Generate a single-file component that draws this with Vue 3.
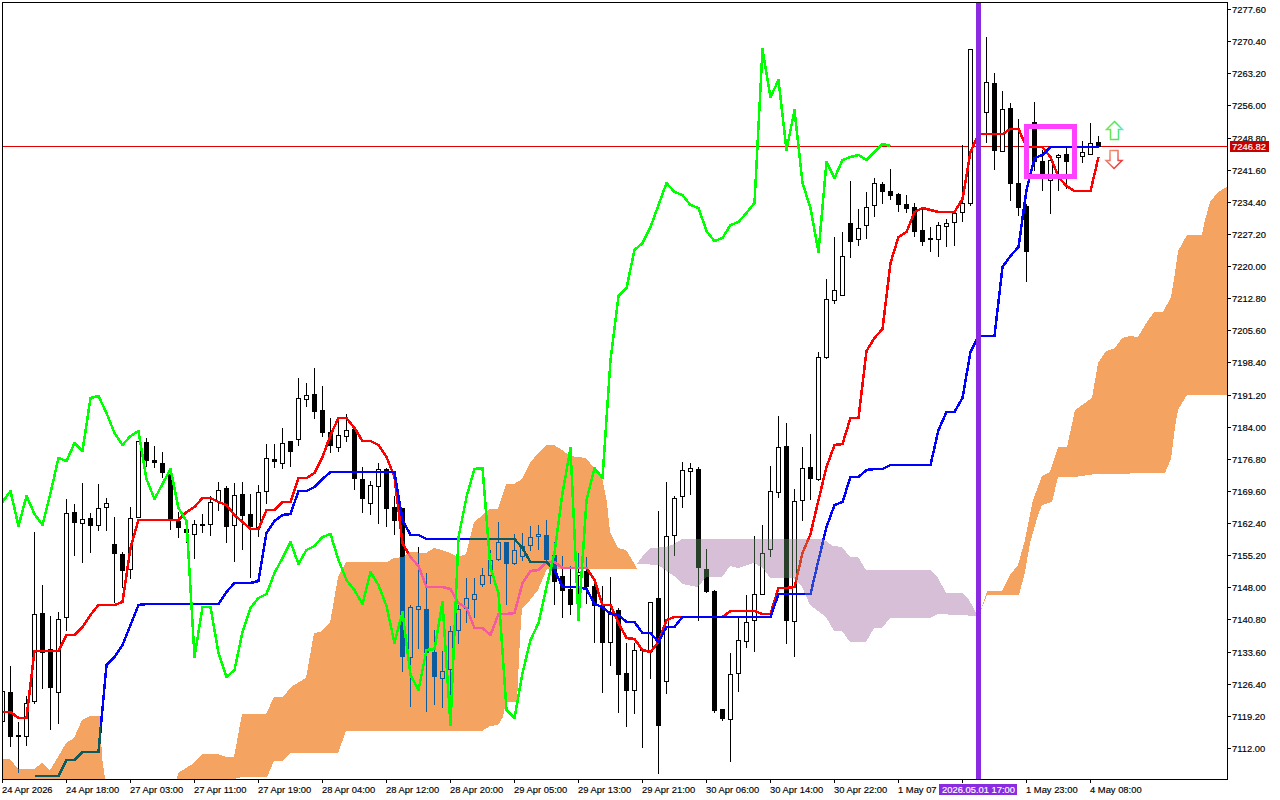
<script setup>
const raw = `0,680,745,691,721,1;1,666,746,692,737,0;2,722,772,735,737,0;3,696,745,703,736,1;4,532,703,614,701,1;5,585,688,613,653,0;6,616,729,649,688,0;7,612,723,619,692,1;8,499,630,513,617,1;9,504,555,512,523,0;10,483,562,519,523,1;11,513,552,518,526,0;12,484,530,508,525,1;13,498,530,503,507,1;14,517,602,544,554,0;15,552,587,554,571,0;16,507,578,518,569,1;17,441,517,441,517,1;18,438,466,442,461,0;19,446,467,460,463,0;20,452,477,463,473,0;21,470,529,474,521,0;22,512,537,521,528,0;23,519,542,529,533,0;24,520,558,524,534,1;25,514,532,524,525,0;26,496,535,502,524,1;27,482,510,490,501,1;28,486,542,488,527,0;29,483,561,495,525,1;30,482,549,494,516,0;31,494,577,514,527,0;32,485,536,492,527,1;33,444,503,458,491,1;34,444,467,459,462,0;35,428,468,443,463,1;36,441,466,441,452,0;37,378,445,398,439,1;38,383,406,395,399,1;39,368,418,394,412,0;40,386,436,410,433,0;41,418,452,432,446,0;42,420,451,435,447,1;43,414,441,430,436,1;44,426,489,429,479,0;45,467,512,479,499,0;46,481,514,485,503,1;47,463,523,469,486,1;48,468,526,469,509,0;49,496,534,507,521,0;50,508,671,508,657,0;51,605,706,607,657,1;52,547,648,606,609,1;53,573,711,609,653,0;54,630,704,652,677,0;55,651,707,671,678,1;56,626,702,631,669,1;57,605,643,609,630,1;58,578,622,598,608,1;59,578,617,594,599,1;60,568,586,575,584,1;61,550,583,560,575,1;62,522,560,542,559,1;63,542,604,542,564,0;64,534,564,550,563,1;65,533,560,546,556,1;66,526,550,537,545,1;67,525,549,534,536,1;68,520,561,535,560,0;69,542,604,555,582,0;70,556,617,576,591,0;71,566,614,589,605,0;72,553,605,572,575,1;73,557,603,571,587,0;74,580,642,586,606,0;75,586,692,605,643,0;76,577,665,612,642,1;77,608,712,610,675,0;78,643,726,673,691,0;79,643,713,650,690,1;80,649,747,649,650,0;81,602,678,602,651,1;82,511,773,598,726,0;83,482,693,536,681,1;84,496,555,498,535,1;85,462,507,470,496,1;86,463,494,468,471,1;87,467,620,469,568,0;88,549,592,569,592,0;89,590,712,591,711,0;90,709,720,709,719,0;91,653,761,674,719,1;92,618,691,640,673,1;93,595,647,622,641,1;94,536,651,594,620,1;95,525,594,553,594,1;96,466,556,491,549,1;97,416,497,447,492,1;98,423,643,446,621,0;99,489,656,501,621,1;100,447,520,468,500,1;101,434,499,467,479,0;102,352,480,357,479,1;103,279,358,299,357,1;104,237,303,290,300,1;105,232,295,256,295,1;106,181,257,223,242,0;107,209,245,228,239,1;108,192,238,207,225,1;109,178,216,183,205,1;110,182,203,184,192,0;111,169,199,191,196,0;112,193,211,194,205,0;113,195,212,204,209,0;114,203,236,207,232,0;115,208,245,230,242,0;116,227,251,238,240,0;117,222,256,225,239,1;118,219,246,223,226,1;119,213,245,213,222,1;120,145,221,203,212,1;121,49,205,49,203,1;123,37,142,82,112,1;124,73,169,83,151,0;125,91,150,109,151,1;126,103,200,108,184,0;127,119,215,183,208,0;128,204,281,206,252,0;129,102,170,122,162,0;130,150,190,161,174,0;131,159,213,160,180,1;132,154,190,155,157,1;133,148,188,154,162,0;135,141,162,152,156,1;136,123,154,143,154,1;137,136,147,142,147,0`

const candles = raw.split(';').map((row) => {
  const [k, hi, lo, top, bot, up] = row.split(',').map(Number)
  return { x: 2 + 8 * k, hi, lo, top, bot, up: up === 1 }
})

const stepLine = (ys, start = 0) => ys.map((y, i) => `${2.5 + 8 * (i + start)},${y}`).join(' ')

const red = stepLine([712,712,718,718,651,651,651,651,635,635,627,615,605,605,605,602,548,520,520,520,520,520,520,512,507,498,498,502,505,515,522,529,529,510,510,502,502,478,478,473,457,435,418,418,428,441,441,445,457,477,543,557,566,587,587,587,589,603,608,628,628,635,614,614,613,583,571,570,562,562,568,568,568,568,580,605,605,623,638,639,650,652,642,620,617,617,617,617,617,617,617,611,611,611,611,614,614,588,588,587,553,534,500,467,445,444,418,418,351,338,329,263,237,232,212,208,210,212,212,212,199,152,134,134,134,134,129,129,147,147,147,157,177,186,191,191,191,157])

const blue = stepLine([776,776,776,776,760,760,752,752,752,665,657,645,625,605,604,604,604,604,604,604,604,604,604,604,592,583,583,583,581,533,521,515,514,491,491,487,479,472,472,472,472,472,472,472,472,472,520,535,535,539,539,539,539,539,539,539,539,539,539,539,539,548,562,562,562,570,587,587,587,589,604,607,614,615,622,622,633,633,642,627,627,617,617,617,617,617,617,617,617,617,617,617,617,594,594,594,594,594,560,527,505,502,477,477,470,469,469,465,465,465,465,465,465,430,412,412,398,352,336,336,336,267,256,247,190,158,155,147,147,147,147,147,147,147], 4)

const green1 = [502,491,526,496,514,525,493,458,461,443,451,398,396,413,433,445,436,431,479,499,484,469,508,521,657,607,607,653,677,670,632,608,598,594,573,558,542,564,550,546,537,534,560,580,590,604,572,585,606,643,612,675,690,650,649,602,725,537,497,469,468,568,593,710,718,673,640,623,587,553,493,448,620,500,468,478,360,296,288,250,243,227,205,183,192,195,205,208,231,241,238,225,222,213,203,49,97,80,150,110,183,208,252,162,178,160,157,155,160,152,144,146]
const green = stepLine(green1)

const poly = (pts) => pts.map((p) => p.join(',')).join(' ')

const orange = [
  poly([[2,759],[10,759],[18,769],[34,769],[42,763],[50,770],[58,757],[66,743],[74,738],[82,720],[90,716],[100,716],[102,757],[105,779],[2,779]]),
  poly([[177,779],[178,773],[186,768],[194,763],[202,754],[218,754],[226,757],[234,757],[242,714],[266,714],[274,697],[283,697],[291,687],[306,678],[314,633],[320,632],[330,623],[338,577],[346,562],[387,562],[394,558],[403,557],[410,552],[426,553],[434,548],[442,550],[450,553],[458,557],[466,554],[474,522],[490,509],[498,509],[506,484],[514,484],[522,479],[530,463],[538,453],[546,445],[554,445],[562,450],[570,456],[586,458],[594,468],[602,477],[607,503],[610,532],[618,548],[626,550],[634,563],[637,569],[547,569],[538,590],[530,600],[522,608],[520,637],[517,702],[506,702],[503,717],[498,725],[490,726],[482,731],[346,731],[338,753],[290,753],[282,761],[274,761],[267,777],[242,777],[234,779]]),
  poly([[981,610],[987,591],[1002,591],[1010,575],[1018,565],[1025,540],[1033,500],[1042,476],[1050,472],[1058,447],[1067,447],[1075,410],[1092,398],[1098,363],[1106,351],[1115,348],[1122,338],[1130,336],[1138,337],[1147,322],[1154,312],[1163,312],[1171,297],[1175,273],[1178,251],[1187,235],[1202,235],[1205,220],[1210,202],[1218,192],[1227,187],[1227,395],[1187,395],[1178,410],[1175,427],[1171,459],[1165,473],[1095,474],[1075,477],[1058,477],[1052,502],[1042,505],[1038,515],[1030,543],[1025,572],[1019,595],[987,595]])
]

const thistle = poly([[637,564],[642,557],[650,548],[666,547],[674,544],[682,539],[823,539],[833,546],[842,547],[850,557],[858,557],[866,570],[930,570],[938,578],[946,593],[962,593],[968,598],[973,607],[978,616],[938,614],[930,618],[890,618],[882,628],[874,628],[866,642],[850,642],[842,631],[834,631],[826,617],[818,611],[810,605],[802,587],[794,578],[770,578],[763,568],[754,563],[738,568],[730,566],[722,577],[706,577],[698,587],[682,584],[674,576],[658,565],[642,564]])

const prices = ['7277.60','7270.40','7263.20','7256.00','7248.80','7241.60','7234.40','7227.20','7220.00','7212.80','7205.60','7198.40','7191.20','7184.00','7176.80','7169.60','7162.40','7155.20','7148.00','7140.80','7133.60','7126.40','7119.20','7112.00']
const priceTicks = prices.map((label, i) => ({ label, y: Math.round(9 + i * 32.13) }))

const timeTicks = [
  [2,'24 Apr 2026'],[66,'24 Apr 18:00'],[130,'27 Apr 03:00'],[194,'27 Apr 11:00'],[258,'27 Apr 19:00'],
  [322,'28 Apr 04:00'],[386,'28 Apr 12:00'],[450,'28 Apr 20:00'],[514,'29 Apr 05:00'],[578,'29 Apr 13:00'],
  [642,'29 Apr 21:00'],[706,'30 Apr 06:00'],[770,'30 Apr 14:00'],[834,'30 Apr 22:00'],[898,'1 May 07'],
  [962,''],[1026,'1 May 23:00'],[1090,'4 May 08:00']
].map(([x, label]) => ({ x, label }))
</script>

<template>
  <div class="chart">
    <svg class="plot" width="1280" height="800" viewBox="0 0 1280 800" xmlns="http://www.w3.org/2000/svg">
      <defs>
        <clipPath id="plotArea"><rect x="3" y="3" width="1224" height="776" /></clipPath>
        <linearGradient id="upEdge" x1="0" x2="1" y1="0" y2="0">
          <stop offset="0" stop-color="#7fe35a" /><stop offset="0.6" stop-color="#48e848" /><stop offset="1" stop-color="#60e8e8" />
        </linearGradient>
        <linearGradient id="downEdge" x1="0" x2="1" y1="0" y2="1">
          <stop offset="0" stop-color="#f6a07a" /><stop offset="0.6" stop-color="#f05a5a" /><stop offset="1" stop-color="#f01010" />
        </linearGradient>
      </defs>

      <g clip-path="url(#plotArea)">
        <rect class="paper" x="0" y="0" width="1280" height="800" />
        <rect class="price-line" x="3" y="146" width="1224" height="1" />
        <g v-for="(c, i) in candles" :key="i">
          <rect class="ink" :x="c.x" :y="c.hi" width="1" :height="c.lo - c.hi + 1" />
          <rect v-if="c.up" class="body-up" :x="c.x - 1.5" :y="c.top + 0.5" width="4" :height="Math.max(c.bot - c.top, 2)" />
          <rect v-else class="ink" :x="c.x - 2" :y="c.top" width="5" :height="Math.max(c.bot - c.top, 2)" />
        </g>
        <polyline class="line line-red" :points="red" />
        <polyline class="line line-blue" :points="blue" />
        <polygon v-for="(p, i) in orange" :key="i" class="cloud-orange" :points="p" />
        <polygon class="cloud-thistle" :points="thistle" />
        <polyline class="line line-green" :points="green" />
        <rect class="vline" x="976" y="3" width="5" height="776" />
        <rect class="marker" x="1026.5" y="126.5" width="48" height="50" />
        <polygon class="arrow-up" points="1114.5,121.5 1122.5,129.5 1118.5,129.5 1118.5,139.5 1110.5,139.5 1110.5,129.5 1106.5,129.5" />
        <polygon class="arrow-down" points="1114,168.5 1122,160.5 1118,160.5 1118,150.5 1110,150.5 1110,160.5 1106,160.5" />
      </g>

      <rect class="frame" x="2.5" y="2.5" width="1225" height="777" />

      <g v-for="t in priceTicks" :key="t.label">
        <rect class="ink" x="1227" :y="t.y" width="4" height="1" />
        <text class="axis-text" x="1232" :y="t.y + 4">{{ t.label }}</text>
      </g>
      <rect class="price-tag" x="1230" y="141" width="39" height="11" />
      <text class="tag-text" x="1232" y="150">7246.82</text>

      <g v-for="t in timeTicks" :key="t.x">
        <rect class="ink" :x="t.x" y="779" width="1" height="4" />
        <text v-if="t.label" class="axis-text" :x="t.x" y="793">{{ t.label }}</text>
      </g>
      <rect class="time-tag" x="939" y="784" width="78" height="11" />
      <text class="tag-text" x="942" y="793">2026.05.01 17:00</text>
    </svg>
  </div>
</template>

<style scoped>
.chart { width: 1280px; height: 800px; background: #fff; overflow: hidden; }
.plot { display: block; }
.paper { fill: #fff; }
.ink { fill: #000; shape-rendering: crispEdges; }
.body-up { fill: #fff; stroke: #000; stroke-width: 1; shape-rendering: crispEdges; }
.line { fill: none; stroke-width: 2.5; shape-rendering: crispEdges; stroke-linejoin: round; }
.line-red { stroke: #ff0000; }
.line-blue { stroke: #0000ff; }
.line-green { stroke: #00ff00; }
.cloud-orange { fill: #0b5b9f; mix-blend-mode: difference; shape-rendering: crispEdges; }
.cloud-thistle { fill: #274027; mix-blend-mode: difference; shape-rendering: crispEdges; }
.vline { fill: #8a2be2; shape-rendering: crispEdges; }
.price-line { fill: #e00000; shape-rendering: crispEdges; }
.marker { fill: none; stroke: #ff40ff; stroke-width: 5; shape-rendering: crispEdges; }
.arrow-up { fill: #fff; stroke: url(#upEdge); stroke-width: 1.5; }
.arrow-down { fill: #fff; stroke: url(#downEdge); stroke-width: 1.5; }
.frame { fill: none; stroke: #000; stroke-width: 1; shape-rendering: crispEdges; }
.axis-text { font: 9.4px "Liberation Sans", Arial, sans-serif; fill: #000; stroke: #000; stroke-width: 0.15; }
.tag-text { font: 9.4px "Liberation Sans", Arial, sans-serif; fill: #fff; stroke: #fff; stroke-width: 0.15; }
.price-tag { fill: #c80000; }
.time-tag { fill: #8a2be2; }
</style>
